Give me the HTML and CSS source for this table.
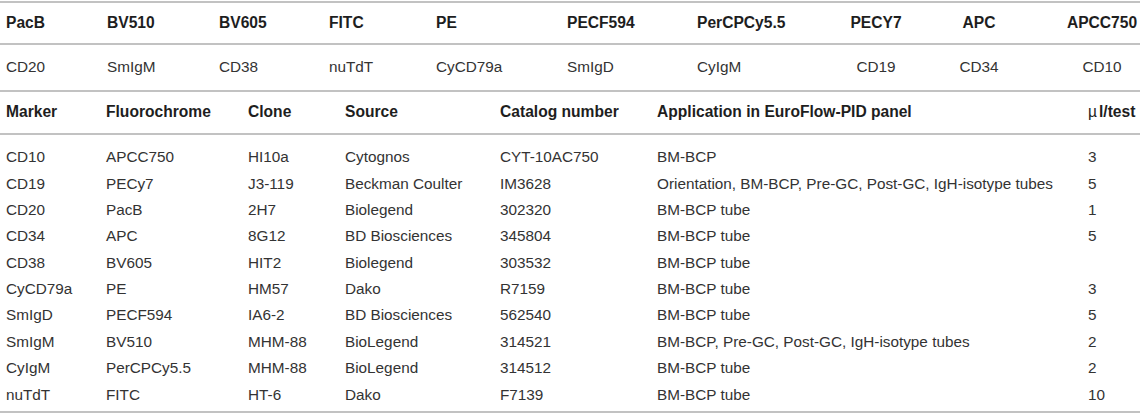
FILE: index.html
```html
<!DOCTYPE html>
<html lang="en">
<head>
<meta charset="utf-8">
<title>EuroFlow-PID panel reagents</title>
<link rel="stylesheet" href="styles.css">
</head>
<body>
<div class="sheet">
  <table class="fluor">
    <colgroup>
      <col class="f1"><col class="f2"><col class="f3"><col class="f4"><col class="f5">
      <col class="f6"><col class="f7"><col class="f8"><col class="f9"><col class="f10">
    </colgroup>
    <thead>
      <tr>
        <th>PacB</th><th>BV510</th><th>BV605</th><th>FITC</th><th>PE</th>
        <th>PECF594</th><th>PerCPCy5.5</th><th class="c">PECY7</th><th class="c">APC</th><th class="c last">APCC750</th>
      </tr>
    </thead>
    <tbody>
      <tr>
        <td>CD20</td><td>SmIgM</td><td>CD38</td><td>nuTdT</td><td>CyCD79a</td>
        <td>SmIgD</td><td>CyIgM</td><td class="c">CD19</td><td class="c">CD34</td><td class="c last">CD10</td>
      </tr>
    </tbody>
  </table>

  <table class="reagents">
    <colgroup>
      <col class="r1"><col class="r2"><col class="r3"><col class="r4"><col class="r5"><col class="r6"><col class="r7">
    </colgroup>
    <thead>
      <tr>
        <th>Marker</th><th>Fluorochrome</th><th>Clone</th><th>Source</th><th>Catalog number</th><th>Application in EuroFlow-PID panel</th><th><span class="mu">µ</span>l/test</th>
      </tr>
    </thead>
    <tbody>
      <tr><td>CD10</td><td>APCC750</td><td>HI10a</td><td>Cytognos</td><td>CYT-10AC750</td><td>BM-BCP</td><td>3</td></tr>
      <tr><td>CD19</td><td>PECy7</td><td>J3-119</td><td>Beckman Coulter</td><td>IM3628</td><td>Orientation, BM-BCP, Pre-GC, Post-GC, IgH-isotype tubes</td><td>5</td></tr>
      <tr><td>CD20</td><td>PacB</td><td>2H7</td><td>Biolegend</td><td>302320</td><td>BM-BCP tube</td><td>1</td></tr>
      <tr><td>CD34</td><td>APC</td><td>8G12</td><td>BD Biosciences</td><td>345804</td><td>BM-BCP tube</td><td>5</td></tr>
      <tr><td>CD38</td><td>BV605</td><td>HIT2</td><td>Biolegend</td><td>303532</td><td>BM-BCP tube</td><td></td></tr>
      <tr><td>CyCD79a</td><td>PE</td><td>HM57</td><td>Dako</td><td>R7159</td><td>BM-BCP tube</td><td>3</td></tr>
      <tr><td>SmIgD</td><td>PECF594</td><td>IA6-2</td><td>BD Biosciences</td><td>562540</td><td>BM-BCP tube</td><td>5</td></tr>
      <tr><td>SmIgM</td><td>BV510</td><td>MHM-88</td><td>BioLegend</td><td>314521</td><td>BM-BCP, Pre-GC, Post-GC, IgH-isotype tubes</td><td>2</td></tr>
      <tr><td>CyIgM</td><td>PerCPCy5.5</td><td>MHM-88</td><td>BioLegend</td><td>314512</td><td>BM-BCP tube</td><td>2</td></tr>
      <tr><td>nuTdT</td><td>FITC</td><td>HT-6</td><td>Dako</td><td>F7139</td><td>BM-BCP tube</td><td>10</td></tr>
    </tbody>
  </table>
</div>
</body>
</html>
```

FILE: styles.css
```css
html, body {
  margin: 0;
  padding: 0;
  background: #ffffff;
}

body {
  font-family: "Liberation Sans", Arial, Helvetica, sans-serif;
  font-size: 15.3px;
  color: #333333;
}

.sheet {
  width: 1140px;
  padding-top: 1px;
}

table {
  width: 100%;
  border-collapse: separate;
  border-spacing: 0;
  table-layout: fixed;
}

th, td {
  line-height: 18px;
  padding: 0 0 0 6px;
  text-align: left;
  vertical-align: middle;
  white-space: nowrap;
}

th {
  font-weight: bold;
  font-size: 15.6px;
  color: #1e1e1e;
}

/* Fluorochrome / marker table */
.fluor th {
  border-top: 2px solid #c2c2c2;
  border-bottom: 2px solid #c2c2c2;
  padding-top: 11px;
  padding-bottom: 11px;
}

.fluor td {
  border-bottom: 2px solid #c2c2c2;
  padding-top: 13px;
  padding-bottom: 14px;
}

.fluor .c {
  text-align: center;
  padding-left: 0;
}

.fluor .last {
  padding-left: 38px;
}

.f1 { width: 101px; }
.f2 { width: 112px; }
.f3 { width: 110px; }
.f4 { width: 107px; }
.f5 { width: 131px; }
.f6 { width: 130px; }
.f7 { width: 129px; }
.f8 { width: 112px; }
.f9 { width: 94px; }
.f10 { width: 114px; }

/* Reagent table */
.reagents th {
  border-bottom: 2px solid #c2c2c2;
  padding-top: 11px;
  padding-bottom: 12px;
}

.reagents td {
  padding-top: 4.2px;
  padding-bottom: 4.2px;
}

.reagents tbody tr:first-child td {
  padding-top: 13.2px;
}

.reagents tbody tr:last-child td {
  padding-bottom: 7.2px;
  border-bottom: 2px solid #c2c2c2;
}

.mu {
  font-weight: normal;
  margin-right: 2px;
}

.r1 { width: 100px; }
.r2 { width: 142px; }
.r3 { width: 97px; }
.r4 { width: 155px; }
.r5 { width: 157px; }
.r6 { width: 431px; }
.r7 { width: 58px; }
```
